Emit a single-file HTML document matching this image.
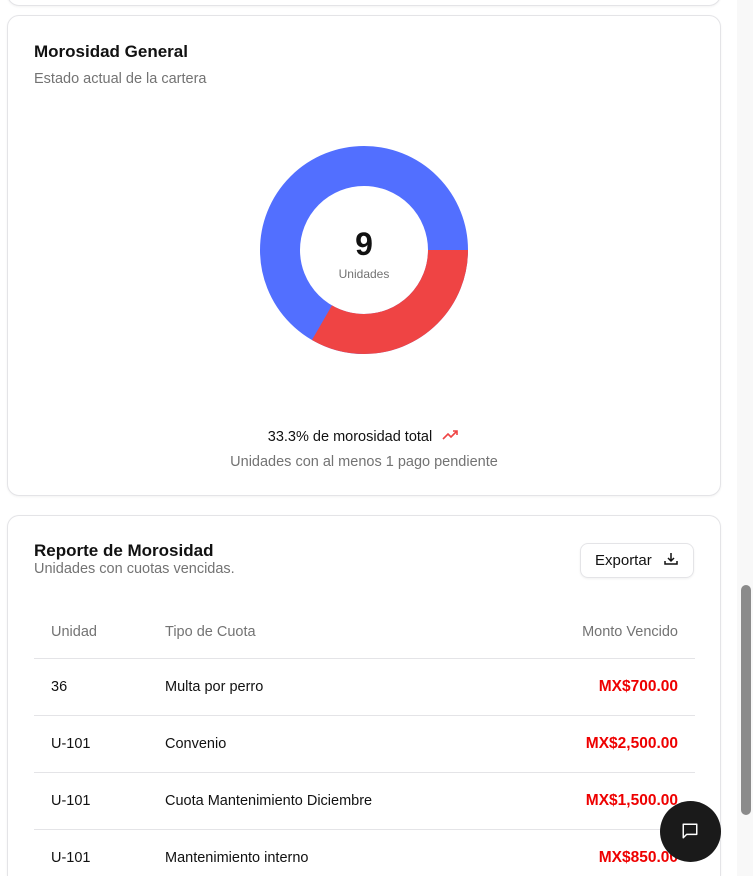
<!DOCTYPE html>
<html style="height:876px;overflow:hidden"><head><meta charset="utf-8"><style>
*{box-sizing:border-box;margin:0;padding:0}
body{width:753px;height:876px;overflow:hidden;background:#fff;font-family:"Liberation Sans",sans-serif;position:relative;color:#111}
.card{position:absolute;left:7px;width:714px;border:1px solid #e4e4e7;border-radius:12px;background:#fff;box-shadow:0 1px 2px rgba(0,0,0,.05)}
.sb{position:absolute;left:737px;top:0;width:16px;height:876px;background:#f8f8f8}
.thumb{position:absolute;left:741px;top:585px;width:10px;height:230px;background:#8b8b8b;border-radius:5px}
.h{font-weight:bold;font-size:17px;position:absolute;left:26px}
.s{font-size:14.5px;color:#737373;position:absolute;left:26px}
table{position:absolute;left:26px;top:94px;width:661px;border-collapse:collapse;font-size:14.5px}
td,th{height:57px;padding:0 17px;text-align:left;border-bottom:1px solid #e4e4e7;font-weight:normal}
th{color:#737373;height:48px;vertical-align:top;padding-top:14px}
.r{text-align:right;color:#e00;font-weight:bold;font-size:15.5px}
th.r{color:#737373;font-weight:normal;font-size:14.5px}
</style></head><body>
<div class="card" style="top:-20px;height:26px"></div>
<div class="card" style="top:15px;height:481px">
<div class="h" style="top:26px">Morosidad General</div>
<div class="s" style="top:55px">Estado actual de la cartera</div>
<svg style="position:absolute;left:252px;top:130px" width="210" height="210" viewBox="0 0 210 210">
<circle cx="104" cy="104" r="84" fill="none" stroke="#526fff" stroke-width="40"/>
<circle cx="104" cy="104" r="84" fill="none" stroke="#ef4444" stroke-width="40" stroke-dasharray="175.9 400"/>
</svg>
<div style="position:absolute;left:306px;top:210px;width:100px;text-align:center;font-size:32px;font-weight:bold">9</div>
<div style="position:absolute;left:306px;top:251px;width:100px;text-align:center;font-size:12px;color:#737373">Unidades</div>
<div style="position:absolute;left:0;width:712px;top:413px;text-align:center;font-size:14.5px">33.3% de morosidad total <svg width="18" height="12" viewBox="0 0 18 12" style="margin-left:6px"><path d="M1 10l5-5 3 3 6-6M11 2h4v4" fill="none" stroke="#ef4444" stroke-width="1.6"/></svg></div>
<div style="position:absolute;left:0;width:712px;top:438px;text-align:center;font-size:14.5px;color:#737373">Unidades con al menos 1 pago pendiente</div>
</div>
<div class="card" style="top:515px;height:361px;border-bottom:none;border-radius:12px 12px 0 0">
<div class="h" style="top:25px">Reporte de Morosidad</div>
<div class="s" style="top:45px">Unidades con cuotas vencidas.</div>
<div style="position:absolute;left:572px;top:27px;width:114px;height:35px;border:1px solid #e4e4e7;border-radius:8px;font-size:15px;padding:8px 0 0 14px;box-shadow:0 1px 2px rgba(0,0,0,.06)">Exportar <svg width="14" height="14" viewBox="0 0 14 14" style="margin-left:8px;vertical-align:-1px"><path d="M7 1v8M4 6l3 3 3-3M1 9v3h12V9" fill="none" stroke="#111" stroke-width="1.5"/></svg></div>
<table>
<tr><th style="width:114px">Unidad</th><th>Tipo de Cuota</th><th class="r">Monto Vencido</th></tr>
<tr><td>36</td><td>Multa por perro</td><td class="r">MX$700.00</td></tr>
<tr><td>U-101</td><td>Convenio</td><td class="r">MX$2,500.00</td></tr>
<tr><td>U-101</td><td>Cuota Mantenimiento Diciembre</td><td class="r">MX$1,500.00</td></tr>
<tr><td>U-101</td><td>Mantenimiento interno</td><td class="r">MX$850.00</td></tr>
</table>
</div>
<div style="position:absolute;left:660px;top:801px;width:61px;height:61px;border-radius:50%;background:#1a1a1a"><svg width="18" height="18" viewBox="0 0 16 16" style="position:absolute;left:21px;top:21px"><path d="M2 2h12v9H5l-3 3z" fill="none" stroke="#fff" stroke-width="1.3" stroke-linejoin="round"/></svg></div>
<div class="sb"></div><div class="thumb"></div>
</body></html>
